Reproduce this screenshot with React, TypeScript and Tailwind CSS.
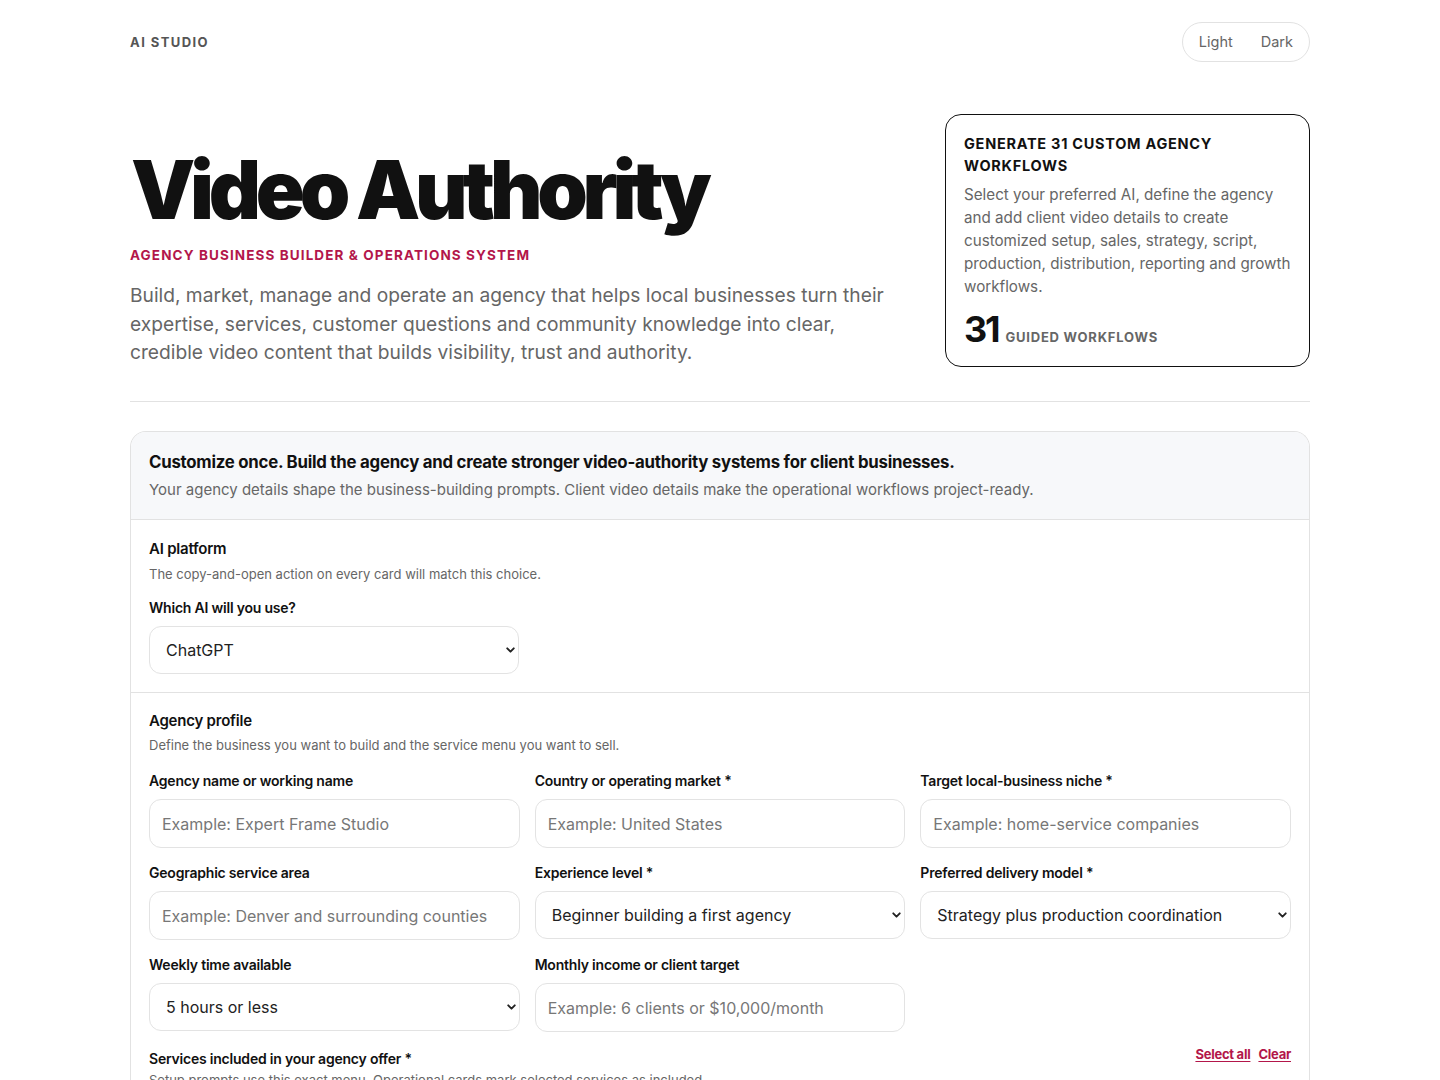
import { ChevronDown } from 'lucide-react'

const font = { fontFamily: 'Inter, "Noto Sans", Arial, sans-serif' }

interface FieldProps {
  label: string
  placeholder?: string
  value?: string
}

function TextField({ label, placeholder }: FieldProps) {
  return (
    <div className="flex flex-col">
      <label className="mb-[9px] text-[14px] font-semibold leading-[18px] tracking-[-0.015em] text-[#111]">{label}</label>
      <input
        type="text"
        placeholder={placeholder}
        className="h-[49px] w-full rounded-xl border border-[#e3e3e3] bg-white px-[12px] text-[16px] text-[#222] placeholder:text-[#777] focus:outline-none"
      />
    </div>
  )
}

function SelectField({ label, value }: FieldProps) {
  return (
    <div className="flex flex-col">
      {label && <label className="mb-[9px] text-[14px] font-semibold leading-[18px] tracking-[-0.015em] text-[#111]">{label}</label>}
      <div className="relative">
        <select
          defaultValue={value}
          className="h-[48px] w-full appearance-none rounded-xl border border-[#e3e3e3] bg-white pl-[16px] pr-10 text-[16px] text-[#222] focus:outline-none"
        >
          <option>{value}</option>
        </select>
        <ChevronDown className="pointer-events-none absolute right-[2px] top-1/2 h-[13px] w-[13px] -translate-y-1/2 text-[#222]" strokeWidth={3.5} />
      </div>
    </div>
  )
}

export default function App() {
  return (
    <div className="min-h-screen bg-white text-[#111]" style={font}>
      <div className="mx-auto w-[1180px]">
        {/* Top bar */}
        <header className="flex h-[84px] items-center justify-between">
          <div className="pt-[1px] text-[13px] font-bold tracking-[0.11em] text-[#555]">AI STUDIO</div>
          <div className="flex h-[40px] items-center gap-[28px] rounded-full border border-[#e2e2e2] pl-[16px] pr-[16px] text-[14.5px] text-[#666]">
            <span>Light</span>
            <span>Dark</span>
          </div>
        </header>

        {/* Hero */}
        <section className="flex justify-between pt-[30px] pb-[34px]">
          <div className="w-[770px] pt-[36px]">
            <h1 className="ml-[1px] text-[81px] font-black leading-[80px] tracking-[-0.065em] text-[#111]">Video Authority</h1>
            <p className="mt-[15px] text-[13.5px] font-bold tracking-[0.082em] text-[#b3164a]">AGENCY BUSINESS BUILDER &amp; OPERATIONS SYSTEM</p>
            <p className="mt-[16px] text-[19.2px] leading-[28.5px] text-[#666]">
              Build, market, manage and operate an agency that helps local businesses turn their expertise, services, customer questions and community knowledge into clear, credible video content that builds visibility, trust and authority.
            </p>
          </div>
          <div className="h-[253px] w-[365px] rounded-2xl border border-[#111] pl-[18px] pr-[14px] pt-[18px]">
            <h2 className="text-[14.5px] font-bold leading-[22px] tracking-[0.05em] text-[#111]">GENERATE 31 CUSTOM AGENCY WORKFLOWS</h2>
            <p className="mt-[6px] text-[15.2px] leading-[23px] text-[#666]">
              Select your preferred AI, define the agency and add client video details to create customized setup, sales, strategy, script, production, distribution, reporting and growth workflows.
            </p>
            <div className="mt-[11px] flex items-baseline gap-[7px]">
              <span className="text-[36px] font-bold leading-[40px] tracking-[-0.06em] text-[#111]">31</span>
              <span className="text-[13px] font-bold tracking-[0.06em] text-[#666]">GUIDED WORKFLOWS</span>
            </div>
          </div>
        </section>

        <hr className="border-t border-[#e2e2e2]" />

        {/* Form card */}
        <div className="mt-[29px] overflow-hidden rounded-t-2xl border border-b-0 border-[#e2e2e2]">
          <div className="border-b border-[#e2e2e2] bg-[#f7f8fa] px-[18px] pt-[19px] pb-[18px]">
            <h3 className="text-[16.8px] font-bold leading-[22px] tracking-[-0.014em] text-[#111]">Customize once. Build the agency and create stronger video-authority systems for client businesses.</h3>
            <p className="mt-[6px] text-[15px] leading-[22px] text-[#666]">Your agency details shape the business-building prompts. Client video details make the operational workflows project-ready.</p>
          </div>

          <div className="border-b border-[#e2e2e2] px-[18px] pt-[19px] pb-[18px]">
            <h4 className="text-[15px] font-semibold leading-[20px] tracking-[-0.015em] text-[#111]">AI platform</h4>
            <p className="mt-[6px] text-[13px] leading-[18px] text-[#666]">The copy-and-open action on every card will match this choice.</p>
            <div className="mt-[16px] w-[370px]">
              <SelectField label="Which AI will you use?" value="ChatGPT" />
            </div>
          </div>

          <div className="px-[18px] pt-[18px]">
            <h4 className="text-[15px] font-semibold leading-[20px] tracking-[-0.015em] text-[#111]">Agency profile</h4>
            <p className="mt-[5px] text-[13px] leading-[18px] text-[#666]">Define the business you want to build and the service menu you want to sell.</p>
            <div className="mt-[18px] grid grid-cols-3 gap-x-[15px] gap-y-[16px]">
              <TextField label="Agency name or working name" placeholder="Example: Expert Frame Studio" />
              <TextField label="Country or operating market *" placeholder="Example: United States" />
              <TextField label="Target local-business niche *" placeholder="Example: home-service companies" />
              <TextField label="Geographic service area" placeholder="Example: Denver and surrounding counties" />
              <SelectField label="Experience level *" value="Beginner building a first agency" />
              <SelectField label="Preferred delivery model *" value="Strategy plus production coordination" />
              <SelectField label="Weekly time available" value="5 hours or less" />
              <TextField label="Monthly income or client target" placeholder="Example: 6 clients or $10,000/month" />
            </div>

            <div className="mt-[13px] flex items-start justify-between">
              <span className="mt-[5px] text-[14px] font-semibold leading-[18px] tracking-[-0.015em] text-[#111]">Services included in your agency offer *</span>
              <div className="flex gap-[8px] text-[13px] font-bold leading-[18px] tracking-[-0.02em] text-[#b3164a]">
                <a className="underline underline-offset-2">Select all</a>
                <a className="underline underline-offset-2">Clear</a>
              </div>
            </div>
            <p className="mt-[3px] pb-8 text-[13px] leading-[18px] text-[#666]">Setup prompts use this exact menu. Operational cards mark selected services as included.</p>
          </div>
        </div>
      </div>
    </div>
  )
}
